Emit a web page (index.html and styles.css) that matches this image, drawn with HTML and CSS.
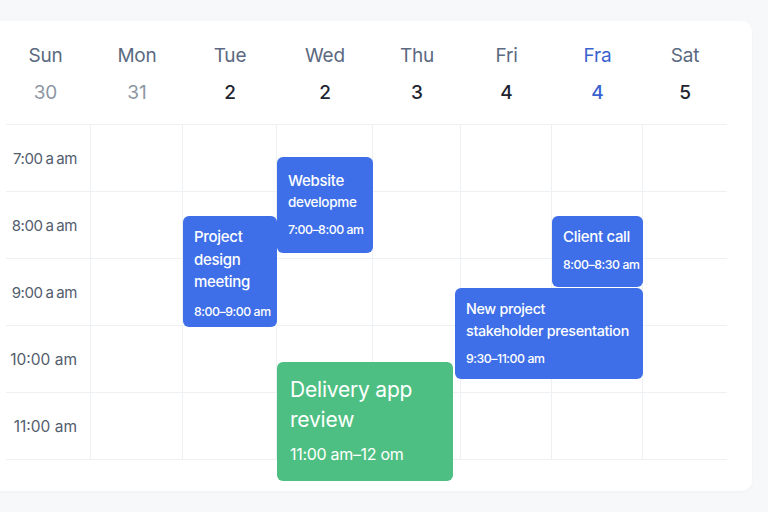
FILE: index.html
```html
<!DOCTYPE html>
<html>
<head>
<meta charset="utf-8">
<link rel="stylesheet" href="styles.css">
</head>
<body>
<div class="card">
  <div class="head">
    <div class="day"><span class="dn">Sun</span><span class="dt muted">30</span></div>
    <div class="day"><span class="dn">Mon</span><span class="dt muted">31</span></div>
    <div class="day"><span class="dn">Tue</span><span class="dt">2</span></div>
    <div class="day"><span class="dn">Wed</span><span class="dt">2</span></div>
    <div class="day"><span class="dn">Thu</span><span class="dt">3</span></div>
    <div class="day"><span class="dn">Fri</span><span class="dt">4</span></div>
    <div class="day today"><span class="dn">Fra</span><span class="dt">4</span></div>
    <div class="day"><span class="dn">Sat</span><span class="dt">5</span></div>
  </div>
  <div class="body">
    <div class="time tight">7:00 a am</div><div class="cell"></div><div class="cell"></div><div class="cell"></div><div class="cell"></div><div class="cell"></div><div class="cell"></div><div class="cell last"></div>
    <div class="time tight">8:00 a am</div><div class="cell"></div><div class="cell"></div><div class="cell"></div><div class="cell"></div><div class="cell"></div><div class="cell"></div><div class="cell last"></div>
    <div class="time tight">9:00 a am</div><div class="cell"></div><div class="cell"></div><div class="cell"></div><div class="cell"></div><div class="cell"></div><div class="cell"></div><div class="cell last"></div>
    <div class="time">10:00 am</div><div class="cell"></div><div class="cell"></div><div class="cell"></div><div class="cell"></div><div class="cell"></div><div class="cell"></div><div class="cell last"></div>
    <div class="time">11:00 am</div><div class="cell"></div><div class="cell"></div><div class="cell"></div><div class="cell"></div><div class="cell"></div><div class="cell"></div><div class="cell last"></div>

    <div class="ev blue ev-web">
      <div class="t1">Website</div>
      <div class="t2">developme</div>
      <div class="tm">7:00–8:00 am</div>
    </div>
    <div class="ev blue ev-proj">
      <div class="t1 lines">Project<br>design<br>meeting</div>
      <div class="tm">8:00–9:00 am</div>
    </div>
    <div class="ev blue ev-client">
      <div class="t1">Client call</div>
      <div class="tm">8:00–8:30 am</div>
    </div>
    <div class="ev blue ev-new">
      <div class="t1 lines2">New project<br>stakeholder presentation</div>
      <div class="tm">9:30–11:00 am</div>
    </div>
    <div class="ev green ev-del">
      <div class="big">Delivery app<br>review</div>
      <div class="bigtm">11:00 am–12 om</div>
    </div>
  </div>
</div>
</body>
</html>
```

FILE: styles.css
```css
* { box-sizing: border-box; }
html, body { margin: 0; padding: 0; }
body {
  width: 768px;
  height: 512px;
  background: #f7f8fa;
  font-family: Inter, "Noto Sans", sans-serif;
  overflow: hidden;
  padding-top: 21px;
}
.card {
  width: 752px;
  height: 470px;
  background: #ffffff;
  border-radius: 0 10px 10px 0;
  box-shadow: 0 1px 3px rgba(30, 40, 60, 0.04);
}
.head {
  display: grid;
  grid-template-columns: 91px 92px 94px 96px 88px 91px 91px 84px;
  height: 103px;
}
.day {
  display: flex;
  flex-direction: column;
  align-items: center;
  padding-top: 22px;
}
.dn {
  font-size: 19px;
  line-height: 26px;
  color: #5b6a80;
  letter-spacing: -0.2px;
}
.dt {
  font-size: 19px;
  line-height: 26px;
  margin-top: 11px;
  color: #1e2330;
  font-weight: 500;
}
.dt.muted { color: #8d97a3; font-weight: 400; }
.today .dn, .today .dt { color: #3a63cf; }
.body {
  position: relative;
  margin-left: 6px;
  width: 721px;
  display: grid;
  grid-template-columns: 85px 92px 94px 96px 88px 91px 91px 84px;
  grid-auto-rows: 67px;
  border-top: 1px solid #eef1f4;
}
.time {
  display: flex;
  align-items: center;
  justify-content: flex-end;
  padding-right: 13px;
  font-size: 15.5px;
  color: #525d6d;
  border-bottom: 1px solid #eef1f4;
  border-right: 1px solid #eef1f4;
  letter-spacing: 0;
}
.time.tight {
  font-size: 15px;
  letter-spacing: -0.4px;
  word-spacing: -1px;
}
.cell {
  border-bottom: 1px solid #eef1f4;
  border-right: 1px solid #eef1f4;
}
.cell.last { border-right: none; }
.ev {
  position: absolute;
  border-radius: 6px;
  color: #ffffff;
  padding: 10px 10px 10px 11px;
  white-space: nowrap;
  overflow: hidden;
}
.blue { background: #3e6fe8; }
.green { background: #4ebf82; }
.t1 {
  font-size: 15px;
  line-height: 22px;
  font-weight: 500;
  letter-spacing: -0.3px;
}
.t1.lines { line-height: 22.5px; }
.t1.lines2 { font-size: 14.3px; line-height: 22px; letter-spacing: -0.3px; }
.t2 {
  font-size: 13.5px;
  line-height: 20px;
  font-weight: 500;
  letter-spacing: -0.3px;
}
.tm {
  font-size: 12.3px;
  font-weight: 500;
  margin-top: 8px;
  letter-spacing: -0.45px;
}
.ev-web { left: 271px; top: 32px; width: 96px; height: 96px; padding-top: 13px; }
.ev-web .tm { margin-top: 10px; }
.ev-proj { left: 177px; top: 91px; width: 94px; height: 111px; }
.ev-proj .tm { margin-top: 10px; }
.ev-client { left: 546px; top: 91px; width: 91px; height: 71px; }
.ev-client .tm { margin-top: 9px; }
.ev-new { left: 449px; top: 163px; width: 188px; height: 91px; }
.ev-new .tm { margin-top: 9px; }
.ev-del { left: 271px; top: 237px; width: 176px; height: 119px; padding: 13px 13px; }
.big {
  font-size: 21px;
  line-height: 30px;
  font-weight: 400;
  letter-spacing: -0.2px;
}
.bigtm {
  font-size: 16px;
  margin-top: 9px;
  font-weight: 400;
  letter-spacing: -0.3px;
}
```
